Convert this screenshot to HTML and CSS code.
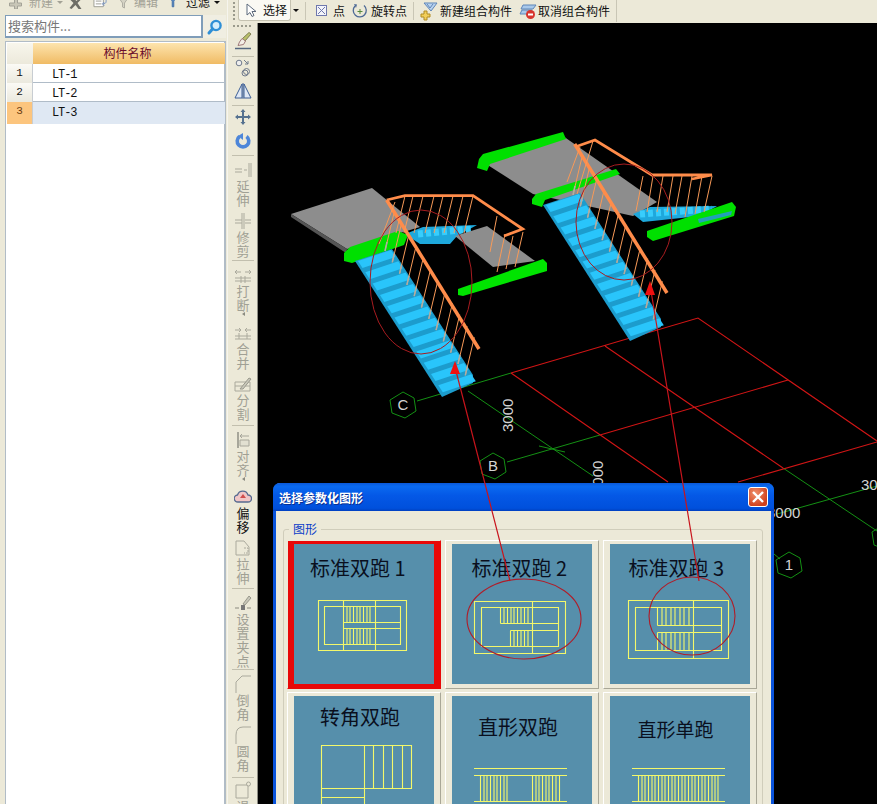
FILE: index.html
```html
<!DOCTYPE html>
<html lang="zh">
<head>
<meta charset="utf-8">
<title>选择参数化图形</title>
<link rel="stylesheet" href="styles.css">
</head>
<body>
<div class="app">
  <aside class="left">
    <div class="left-tools">
      <span class="lt lt-new"><svg class="i14" viewBox="0 0 14 14"><path d="M1 8h5V3h3v5h4v3H9v3H6v-3H1z" fill="#c9c7b8" stroke="#a4a398"/></svg><em>新建</em><i class="caret grey"></i></span>
      <span class="lt lt-x"><svg class="i14" viewBox="0 0 14 14"><path d="M2 1l5 5 5-5 1 2-5 5 4 6-3 0-3-4-4 4-2-1 4-5-5-5z" fill="#6e6e66"/></svg></span>
      <span class="lt lt-doc"><svg class="i14" viewBox="0 0 16 14"><path d="M1 1h10v11H1zM3 6h6M3 9h6" fill="#fff" stroke="#9a9a90"/><path d="M11 9c3 0 3-2 3-4M12 7l-2 2 2 2" fill="none" stroke="#6f8fc4"/></svg></span>
      <span class="lt lt-edit"><svg class="i14" viewBox="0 0 14 14"><path d="M1 1h12L8 8v5l-2-1V8z" fill="#d5d3c5" stroke="#b0afa4"/></svg><em>编辑</em></span>
      <span class="lt lt-filter"><svg class="i10" viewBox="0 0 10 14"><path d="M1 1h8L6 6v7H4V6z" fill="#5d8fc9" stroke="#36659f"/></svg><b>过滤</b><i class="caret"></i></span>
    </div>
    <div class="search">
      <div class="search-input">搜索构件...</div>
      <div class="search-btn"><svg width="18" height="18" viewBox="0 0 18 18"><circle cx="10" cy="7.500" r="4.600" fill="#d7eefb" stroke="#2f8fd6" stroke-width="2.400"/><path d="M6.500 11 3 15" stroke="#2f8fd6" stroke-width="3" stroke-linecap="round"/></svg></div>
    </div>
    <div class="table">
      <div class="row head"><div class="idx"></div><div class="name">构件名称</div></div>
      <div class="row"><div class="idx">1</div><div class="name">LT-1</div></div>
      <div class="row"><div class="idx">2</div><div class="name">LT-2</div></div>
      <div class="row sel-row"><div class="idx">3</div><div class="name">LT-3</div></div>
    </div>
  </aside>

  <div class="right">
    <div class="topbar">
      <span class="grip-v"></span>
      <span class="select-btn"><svg width="12" height="15" viewBox="0 0 12 15"><path d="M2 1v11l3-2.500 2 4 2-1-2-4h4z" fill="#fff" stroke="#5d6a7c"/></svg><span>选择</span></span>
      <i class="caret sel-caret"></i>
      <span class="tsep"></span>
      <span class="tb tb-point"><svg width="13" height="13" viewBox="0 0 13 13"><rect x="1.500" y="1.500" width="10" height="10" fill="#f3f4fa" stroke="#6f78ad"/><path d="M3 3l7 7M10 3l-7 7" stroke="#6f78ad"/></svg><span>点</span></span>
      <span class="tb tb-rot"><svg width="16" height="16" viewBox="0 0 16 16"><path d="M3 3a6.500 6.500 0 1 0 9-.5" fill="none" stroke="#4e6a96" stroke-width="1.300"/><path d="M2 1l3 .5L4 5z" fill="#4e6a96"/><path d="M8 6v5M5.500 8.500h5" stroke="#55883c"/></svg><span>旋转点</span></span>
      <span class="tsep"></span>
      <span class="tb tb-new"><svg width="18" height="20" viewBox="0 0 18 20"><path d="M4 2h13l-6 8z" fill="#b9d3ef" stroke="#5f86b8"/><path d="M7 3l3 4 3-4" fill="none" stroke="#5f86b8"/><path d="M1 13h3v-3h3v3h3v3H7v3H4v-3H1z" fill="#f2cf5b" stroke="#b18c22"/></svg><span>新建组合构件</span></span>
      <span class="tb tb-del"><svg width="18" height="18" viewBox="0 0 18 18"><path d="M4 3h13l-3 4H2zM3 8h10l-2 4H1z" fill="#a9c9ea" stroke="#5f86b8"/><circle cx="11.500" cy="12.500" r="4.500" fill="#d8342c"/><path d="M9 12.500h5" stroke="#fff" stroke-width="2"/></svg><span>取消组合构件</span></span>
      <span class="tend"></span>
    </div>

    <div class="work">
      <nav class="vbar">
        <span class="grip-h"></span>
        <div class="tool m5"><svg class="vi" viewBox="0 0 18 18"><path d="M11 9l6-7-2-1.500-7 6.500z" fill="#b9c06a" stroke="#7d7d50"/><path d="M8 6.500l3.500 2.500-2 3.500-5.500 1 1.500-3.500z" fill="#f3efe6" stroke="#a07a7a"/><path d="M1 16.500h16" stroke="#55687f" stroke-width="1.500"/></svg></div>
        <hr class="sep m6">
        <div class="tool m2"><svg class="vi" viewBox="0 0 18 18"><circle cx="5" cy="4" r="2.800" fill="#eee" stroke="#6f7a8c"/><circle cx="12.500" cy="12.500" r="3" fill="none" stroke="#6f7a8c"/><circle cx="11" cy="14" r="3" fill="none" stroke="#6f7a8c"/><path d="M10 1l4 4M14 2v3h-3" fill="none" stroke="#6f7a8c"/></svg></div>
        <div class="tool m5"><svg class="vi" viewBox="0 0 18 18"><path d="M8 2v14H1zM10 2v14h7z" fill="#dfe8f4" stroke="#3c5e96"/><path d="M9 1v16" stroke="#3c5e96"/></svg></div>
        <hr class="sep m5">
        <div class="tool m2"><svg class="vi" viewBox="0 0 18 18"><path d="M9 1l2.500 3H10v4h4V6.500L17 9l-3 2.500V10h-4v4h1.500L9 17l-2.500-3H8v-4H4v1.500L1 9l3-2.500V8h4V4H6.500z" fill="#55718f"/></svg></div>
        <div class="tool m6"><svg class="vi" viewBox="0 0 18 18"><path d="M5.500 4.500a5.800 5.800 0 1 0 7 0" fill="none" stroke="#4d86d9" stroke-width="3.600"/><path d="M9 1v7L4 4z" fill="#4d86d9"/></svg></div>
        <hr class="sep m5">
        <div class="tool m5 off"><svg class="vi" viewBox="0 0 18 18"><path d="M1 8h7M1 11h7M10 9h3M15 2v14M17 2v14" fill="none" stroke="#aaa99c"/></svg><span class="vl">延<br>伸</span></div>
        <div class="tool m5 off"><svg class="vi" viewBox="0 0 18 18"><path d="M1 8h7M1 11h7M11 8h6M11 11h6M8 1v16M10 1v16" fill="none" stroke="#aaa99c"/></svg><span class="vl">修<br>剪</span></div>
        <hr class="sep m2">
        <div class="tool m5 off"><svg class="vi" viewBox="0 0 18 18"><path d="M1 6h6M3 4L1 6l2 2M11 6h6M15 4l2 2-2 2M1 12h16M1 15h16M7 10v7M11 10v7" fill="none" stroke="#aaa99c"/></svg><span class="vl">打<br>断</span><i class="tri"></i></div>
        <div class="tool m8 off"><svg class="vi" viewBox="0 0 18 18"><path d="M1 6h6M5 4l2 2-2 2M17 6h-6M13 4l-2 2 2 2M1 12h16M1 15h16M5 9v6M13 9v6" fill="none" stroke="#aaa99c"/></svg><span class="vl">合<br>并</span></div>
        <div class="tool m5 off"><svg class="vi" viewBox="0 0 18 18"><path d="M1 7h15v9H1zM1 11h15" fill="none" stroke="#aaa99c"/><path d="M6 14l9-11 2 1-8 10z" fill="#c9c8ba" stroke="#99988c"/></svg><span class="vl">分<br>割</span></div>
        <hr class="sep m4">
        <div class="tool m5 off"><svg class="vi" viewBox="0 0 18 18"><path d="M3 1h2v16H3z" fill="#a7a69a"/><path d="M6 5h9M8 3L6 5l2 2M6 9h9v6H6z" fill="#e2e0d1" stroke="#a7a69a"/></svg><span class="vl">对<br>齐</span><i class="tri"></i></div>
        <div class="tool m7"><svg class="vi" viewBox="0 0 18 18"><path d="M4 14a3.500 3.500 0 0 1-.5-7A5.500 5.500 0 0 1 14 7a3.500 3.500 0 0 1 0 7z" fill="#f0c6c6" stroke="#556a90" stroke-width="1.300"/><path d="M9 6l3 4H6z" fill="#cf4d4d"/></svg><span class="vl">偏<br>移</span></div>
        <div class="tool m5 off"><svg class="vi" viewBox="0 0 18 18"><path d="M2 2h8l5 6v8H2z" fill="none" stroke="#aaa99c"/><path d="M10 9h4v5h-4" fill="none" stroke="#aaa99c" stroke-dasharray="2 1"/></svg><span class="vl">拉<br>伸</span></div>
        <hr class="sep m3">
        <div class="tool m5 off"><svg class="vi" viewBox="0 0 18 18"><path d="M1 14h4M13 14h4" stroke="#aaa99c" stroke-width="1.500"/><rect x="7" y="11" width="4" height="5" fill="#777"/><path d="M9 10l6-8 2 2-6 7z" fill="#c9c8ba" stroke="#99988c"/></svg><span class="vl">设<br>置<br>夹<br>点</span></div>
        <hr class="sep m1">
        <div class="tool m5 off"><svg class="vi" viewBox="0 0 18 18"><path d="M17 1H8L2 7v11" fill="none" stroke="#aaa99c"/></svg><span class="vl">倒<br>角</span></div>
        <div class="tool m5 off"><svg class="vi" viewBox="0 0 18 18"><path d="M17 1H9Q2 1 2 9v9" fill="none" stroke="#aaa99c"/></svg><span class="vl">圆<br>角</span></div>
        <hr class="sep m5">
        <div class="tool m3 off"><svg class="vi" viewBox="0 0 18 18"><path d="M2 4h12v13H2z" fill="none" stroke="#aaa99c"/><circle cx="14.500" cy="3" r="2" fill="#ece9d8" stroke="#aaa99c"/></svg><span class="vl">退</span></div>
      </nav>

      <main class="canvas">
        <svg class="scene" viewBox="258 24 619 780" width="619" height="780">
          <defs>
            <polygon id="tread" points="358,262 391,251 395.500,258 362.500,269" fill="#29c5fb"/>
            <g id="bal">
              <line x1="385" y1="252" x2="394" y2="214" stroke="#f89a58" stroke-width="1"/>
              <line x1="385" y1="252" x2="387" y2="243" stroke="#b0aea4" stroke-width="1.500"/>
            </g>
            <g id="flight">
              <polygon points="355,262 392,250 473,376 473,384 442,398" fill="#1c9ccd"/>
              <use href="#tread"/>
              <use href="#tread" x="7.300" y="11.300"/>
              <use href="#tread" x="14.600" y="22.600"/>
              <use href="#tread" x="21.900" y="33.900"/>
              <use href="#tread" x="29.200" y="45.200"/>
              <use href="#tread" x="36.500" y="56.500"/>
              <use href="#tread" x="43.800" y="67.800"/>
              <use href="#tread" x="51.100" y="79.100"/>
              <use href="#tread" x="58.400" y="90.400"/>
              <use href="#tread" x="65.700" y="101.700"/>
              <use href="#tread" x="73" y="113"/>
              <use href="#tread" x="80.300" y="124.300"/>
              <use href="#bal"/>
              <use href="#bal" x="7.300" y="11.300"/>
              <use href="#bal" x="14.600" y="22.600"/>
              <use href="#bal" x="21.900" y="33.900"/>
              <use href="#bal" x="29.200" y="45.200"/>
              <use href="#bal" x="36.500" y="56.500"/>
              <use href="#bal" x="43.800" y="67.800"/>
              <use href="#bal" x="51.100" y="79.100"/>
              <use href="#bal" x="58.400" y="90.400"/>
              <use href="#bal" x="65.700" y="101.700"/>
              <use href="#bal" x="73" y="113"/>
              <use href="#bal" x="80.300" y="124.300"/>
              <line x1="386.700" y1="201" x2="479" y2="350" stroke="#ff8c4a" stroke-width="3.500"/>
            </g>
          </defs>

          <!-- grid -->
          <g fill="none" stroke="#149014" stroke-width="1">
            <path d="M417 402 511 374M507 463 600 436M468 392 593 477M539 447 565 453M783 469 877 532M777 515 877 487M774 555 780 560"/>
            <polygon points="403,393 414,399 416,412 405,419 392,414 390,401"/>
            <polygon points="493,454 504,460 506,473 495,480 482,475 480,462"/>
            <polygon points="789,553 800,559 802,572 791,579 778,574 776,561"/>
            <polygon points="885,525 896,531 898,544 887,551 874,546 872,533"/>
          </g>
          <path d="M511 374 698 319 877 442M600 436 788 381M738 483 877 443M511 374 668 483M605 347 783 469" fill="none" stroke="#d01515" stroke-width="1.100"/>
          <g class="dim">
            <text x="403" y="411" text-anchor="middle">C</text>
            <text x="493" y="472" text-anchor="middle">B</text>
            <text x="789" y="571" text-anchor="middle">1</text>
            <text transform="translate(513 433) rotate(-90)">3000</text>
            <text transform="translate(603 495) rotate(-90)">3000</text>
            <text x="767" y="519">3000</text>
            <text x="861" y="491">3000</text>
          </g>

          <!-- stair one -->
          <polygon points="291,215 372,189 420,228 347,250" fill="#8d8d8d"/>
          <polygon points="291,215 291,218 346,254 347,250" fill="#555"/>
          <polygon points="405,235 423,228 477,226 457,237 450,245 420,245" fill="#1ea8dc"/>
          <line x1="418" y1="235" x2="472" y2="230" stroke="#38cdfc" stroke-width="7" stroke-dasharray="5 3"/>
          <polygon points="455,237 487,227 535,262 493,268" fill="#8d8d8d"/>
          <polygon points="344,254 350,248 398,232 408,236 404,246 352,264 344,262" fill="#00e000"/>
          <polygon points="458,290 543,260 547,264 547,272 463,297 458,296" fill="#00e400"/>
          <use href="#flight"/>
          <path d="M405 197l-9 37M413 197l-9 37M423 197l-9 37M434 197l-9 37M443 197l-9 37M453 197l-9 37M463 197l-9 37M473 197l-9 37M395 203l-16 42M497 217l-7 36M505 235l-8 38M513 237l-7 33M523 233l-8 35" stroke="#f89a58" stroke-width="1" fill="none"/>
          <polyline points="386.700,201 405,196.700 473,196.700 522.700,230 504,237" fill="none" stroke="#ff8c4a" stroke-width="2.800"/>
          <ellipse cx="421" cy="283" rx="51" ry="72" fill="none" stroke="#a81c20"/>

          <!-- stair two -->
          <polygon points="483,163 563,137 657,203 633,217 533,195" fill="#8d8d8d"/>
          <polygon points="479,160 483,155 563,133 566,140 490,165 487,172 477,169" fill="#00e000"/>
          <polygon points="633,215 650,208 717,207 700,217 643,223" fill="#1ea8dc"/>
          <line x1="640" y1="215" x2="712" y2="210" stroke="#38cdfc" stroke-width="7" stroke-dasharray="5 3"/>
          <polygon points="532,200 536,195 616,170 620,175 545,201 542,208 532,205" fill="#00e000"/>
          <polygon points="647,232 732,203 736,208 734,217 653,242 647,238" fill="#00e000"/>
          <polygon points="698,220 732,212 731,216 699,224" fill="#22a0b8"/>
          <use href="#flight" x="188" y="-56"/>
          <path d="M580 148l-13 35M593 142l-16 53M643 177l-7 35M653 177l-6 36M663 177l-6 36M673 177l-6 36M682 177l-7 38M692 177l-7 41M702 177l-7 38M712 177l-8 36" stroke="#f89a58" stroke-width="1" fill="none"/>
          <polyline points="575,148 595,141 652,176 712,176 692,180" fill="none" stroke="#ff8c4a" stroke-width="2.800"/>
          <ellipse cx="624" cy="223" rx="48" ry="58" fill="none" stroke="#a81c20"/>
        </svg>

        <section class="dialog">
          <header class="dlg-title">
            <span>选择参数化图形</span>
            <button class="dlg-close" type="button"><svg width="14" height="14" viewBox="0 0 14 14"><path d="M2 2l10 10M12 2L2 12" stroke="#fff" stroke-width="2.400"/></svg></button>
          </header>
          <fieldset class="group">
            <legend>图形</legend>
            <div class="cells">
              <div class="cell sel"><svg class="thumb" viewBox="0 0 140 140">
                <text x="16" y="32" class="cap">标准双跑 1</text>
                <path d="M24.500 56.500h88v50h-88zM30.500 62.500h76v38h-76zM49.500 56.500v50M81.500 56.500v50M49.500 78.500h57M49.500 84.500h57M53 62.500v16M56 62.500v16M59.500 62.500v16M63 62.500v16M66 62.500v16M69.500 62.500v16M73 62.500v16M76 62.500v16M53 84.500v16M56 84.500v16M59.500 84.500v16M63 84.500v16M66 84.500v16M69.500 84.500v16M73 84.500v16M76 84.500v16" class="plan"/>
              </svg></div>
              <div class="cell"><svg class="thumb" viewBox="0 0 140 140">
                <text x="19.500" y="32" class="cap">标准双跑 2</text>
                <path d="M22.500 57.500h91v52h-91zM29.500 63.500h77v39h-77zM80.500 57.500v52M48.500 79.500h58M58.500 86.500h48M48.500 63.500v16M58.500 86.500v16M52 63.500v16M55.500 63.500v16M59 63.500v16M62 63.500v16M65.500 63.500v16M69 63.500v16M72.500 63.500v16M76 63.500v16M62 86.500v16M65.500 86.500v16M69 86.500v16M72.500 86.500v16M76 86.500v16" class="plan"/>
              </svg></div>
              <div class="cell"><svg class="thumb" viewBox="0 0 140 140">
                <text x="18.500" y="32" class="cap">标准双跑 3</text>
                <path d="M18.500 56.500h100v58h-100zM25.500 63.500h86v43h-86zM83.500 56.500v58M47.500 81.500h64M47.500 88.500h64M47.500 63.500v18M47.500 88.500v18M52 63.500v18M56 63.500v18M61 63.500v18M65 63.500v18M70 63.500v18M74 63.500v18M79 63.500v18M52 88.500v18M56 88.500v18M61 88.500v18M65 88.500v18M70 88.500v18M74 88.500v18M79 88.500v18" class="plan"/>
              </svg></div>
              <div class="cell"><svg class="thumb" viewBox="0 0 140 140">
                <text x="26" y="29" class="cap">转角双跑</text>
                <path d="M27.500 49.500h90v43h-90zM27.500 49.500v91M70.500 49.500v91M79.500 49.500v43M89.500 49.500v43M98.500 49.500v43M108.500 49.500v43M27.500 101.500h43" class="plan"/>
              </svg></div>
              <div class="cell"><svg class="thumb" viewBox="0 0 140 140">
                <text x="26" y="39" class="cap">直形双跑</text>
                <path d="M22 72.500h93M22 79.500h93M22 105.500h93M28.500 79.500v26M32 79.500v26M35 79.500v26M38.500 79.500v26M42 79.500v26M45 79.500v26M48.500 79.500v26M52 79.500v26M55 79.500v26M80.500 79.500v26M84 79.500v26M87 79.500v26M90.500 79.500v26M94 79.500v26M97 79.500v26M100.500 79.500v26M104 79.500v26M107.500 79.500v26" class="plan"/>
              </svg></div>
              <div class="cell"><svg class="thumb" viewBox="0 0 140 140">
                <text x="27.500" y="41" class="cap cap-s">直形单跑</text>
                <path d="M22 72.500h93M22 79.500h93M22 105.500h93M28.500 79.500v26M32 79.500v26M35 79.500v26M38.500 79.500v26M42 79.500v26M45 79.500v26M48.500 79.500v26M52 79.500v26M55 79.500v26M58.500 79.500v26M62 79.500v26M65 79.500v26M68.500 79.500v26M72 79.500v26M75 79.500v26M78.500 79.500v26M82 79.500v26M85 79.500v26M88.500 79.500v26M92 79.500v26M95 79.500v26M98.500 79.500v26M102 79.500v26M105 79.500v26M108 79.500v26" class="plan"/>
              </svg></div>
            </div>
          </fieldset>
        </section>

        <svg class="scene over" viewBox="258 24 619 780" width="619" height="780">
          <path d="M456 372 510 582M651 292 699 582" fill="none" stroke="#c8141c" stroke-width="1.200"/>
          <polygon points="455,362 460,375 450,375" fill="#f01010"/>
          <polygon points="650,282 655,296 645,296" fill="#f01010"/>
          <ellipse cx="524" cy="620" rx="57" ry="40" fill="none" stroke="#b01c28" stroke-width="1.100"/>
          <ellipse cx="692" cy="617" rx="43" ry="39" fill="none" stroke="#b01c28" stroke-width="1.100"/>
        </svg>
      </main>
    </div>
  </div>
</div>
</body>
</html>
```
FILE: styles.css
```css
* { box-sizing: border-box; }
html, body { margin: 0; height: 100%; overflow: hidden; }
body {
  font-family: "Noto Sans CJK SC", "Liberation Sans", sans-serif;
  font-size: 12px;
  color: #111;
  background: #ece9d8;
}
.app { display: flex; width: 877px; height: 804px; overflow: hidden; }

/* left panel */
.left { width: 228px; flex: none; display: flex; flex-direction: column; background: #ece9d8; border-right: 1px solid #f6f5ee; }
.left-tools { height: 15px; overflow: hidden; display: flex; align-items: flex-start; padding-left: 8px; }
.lt { display: flex; align-items: center; height: 14px; margin-top: -5px; flex: none; }
.lt em { font-style: normal; color: #a3a296; margin-left: 6px; line-height: 12px; }
.lt b { font-weight: 400; margin-left: 9px; line-height: 12px; }
.i14 { width: 15px; height: 14px; display: block; }
.i10 { width: 8px; height: 14px; display: block; }
.lt-new .caret { margin-left: 4px; }
.lt-x { margin-left: 6px; }
.lt-doc { margin-left: 9px; }
.lt-edit { margin-left: 8px; }
.lt-edit em { margin-left: 3px; }
.lt-filter { margin-left: 11px; }
.lt-filter .caret { margin-left: 4px; }
.caret { display: inline-block; width: 0; height: 0; border: 3px solid transparent; border-top: 3px solid #111; border-bottom: 0; }
.caret.grey { border-top-color: #a3a296; }

.search { display: flex; height: 23px; margin: 0 1px 0 5px; flex: none; }
.search-input { width: 198px; height: 23px; border: 1px solid #7f9db9; border-width: 1px 2px 2px 1px; background: #fff; color: #777; font-size: 13px; line-height: 20px; padding-left: 2px; }
.search-btn { flex: 1; display: flex; align-items: center; justify-content: center; background: #f0eee2; }

.table { flex: 1; margin: 3px 1px 0 5px; background: #fff; border: 2px solid #b1bcc6; border-width: 1px 2px 0 1px; padding: 1px 0 0 1px; }
.row { display: grid; grid-template-columns: 26px 192px; height: 19px; border-bottom: 1px solid #b0bcc8; }
.row .idx { background: linear-gradient(#fbfaf5, #e8e6da); border-right: 1px solid #c8cdd2; text-align: center; font-family: "Liberation Mono", monospace; font-size: 11px; line-height: 19px; }
.row .name { font-family: "Liberation Mono", monospace; font-size: 12px; letter-spacing: -1.100px; line-height: 22px; padding-left: 19px; }
.row.head { height: 21px; border-bottom: 0; }
.row.head .idx { background: linear-gradient(#f8f6ec, #ece9db); border-right: 0; }
.row.head .name { background: linear-gradient(#fde4ae, #f0bb64); font-family: "Noto Sans CJK SC", sans-serif; font-size: 12px; letter-spacing: 0; color: #6b0a2b; text-align: center; padding: 0 3px 0 0; line-height: 20px; }
.sel-row .idx { background: #fcc57e; color: #6b3a10; }
.sel-row .name { background: #dfe8f3; }

/* right side */
.right { flex: 1; min-width: 0; display: flex; flex-direction: column; }
.topbar { height: 23px; flex: none; display: flex; align-items: center; background: #ece9d8; padding: 0 0 2px 5px; }
.grip-v { width: 2px; height: 18px; margin-right: 3px; background: repeating-linear-gradient(#9a9a8c 0 2px, transparent 2px 4px); }
.select-btn { display: flex; align-items: center; gap: 6px; width: 53px; height: 21px; padding-left: 6px; background: #faf9f3; border: 1px solid #c5c2b0; border-width: 0 1px 1px 1px; border-radius: 0 0 3px 3px; line-height: 20px; }
.sel-caret { margin-left: 2px; }
.tsep { width: 1px; height: 18px; background: #c9c6b5; margin: 0 6px; }
.tb { display: flex; align-items: center; line-height: 20px; flex: none; }
.tb-point { gap: 5px; margin-left: 3px; }
.tb-rot { gap: 3px; margin-left: 7px; }
.tb-new { gap: 2px; margin-left: 0; }
.tb-del { gap: 1px; margin-left: 7px; }
.tend { width: 1px; height: 22px; background: #c9c6b5; margin-left: 6px; }

.work { flex: 1; display: flex; min-height: 0; }
.vbar { width: 30px; flex: none; display: flex; flex-direction: column; align-items: center; background: #ece9d8; box-shadow: inset -1px 0 0 #8e8d84; overflow: hidden; }
.grip-h { width: 20px; height: 2px; flex: none; margin-top: 2px; background: repeating-linear-gradient(90deg, #9a9a8c 0 2px, transparent 2px 4px); }
.tool { display: flex; flex-direction: column; align-items: center; flex: none; }
.vi { width: 18px; height: 18px; display: block; flex: none; }
.vl { display: block; font-size: 13px; line-height: 14px; text-align: center; }
.off .vl { color: #a0a094; }
.tri { display: block; width: 0; height: 4px; border: 2px solid transparent; border-right: 3px solid #8a8a80; border-left: 0; }
.sep { width: 22px; height: 1px; border: 0; background: #c2bfae; flex: none; margin-bottom: 0; }
.m1 { margin-top: 1px; }
.m2 { margin-top: 2px; }
.m3 { margin-top: 3px; }
.m4 { margin-top: 4px; }
.m5 { margin-top: 5px; }
.m6 { margin-top: 6px; }
.m7 { margin-top: 7px; }
.m8 { margin-top: 8px; }

/* canvas */
.canvas { flex: 1; position: relative; overflow: hidden; background: #000; }
.scene { position: absolute; left: 0; top: 0; display: block; }
.scene.over { pointer-events: none; }
.dim text { fill: #d4d4d4; font-family: "Liberation Sans", sans-serif; font-size: 15px; }

/* dialog */
.dialog { position: absolute; left: 15px; top: 460px; width: 501px; height: 330px; background: #ece9d8; border: 3px solid #0a54dc; border-top: 0; border-radius: 7px 7px 0 0; }
.dlg-title { height: 28px; margin: 0 -3px; display: flex; align-items: center; justify-content: space-between; padding: 0 6px 0 6px; background: linear-gradient(#0a58d8 0, #0a6af0 12%, #0458e6 45%, #0050dc 90%, #0040c0 100%); border-radius: 7px 7px 0 0; color: #fff; font-weight: 700; font-size: 12px; text-shadow: 1px 1px 0 #0a2f90; }
.dlg-close { width: 20px; height: 20px; padding: 0; border: 1px solid #fff; border-radius: 3px; background: radial-gradient(circle at 35% 30%, #f0906c, #d0401c 75%); display: flex; align-items: center; justify-content: center; }
.group { margin: 11px 8px 0 7px; padding: 4px 3px 0; border: 1px solid #d0cdbb; border-radius: 3px; min-width: 0; height: 400px; }
.group legend { padding: 0 4px; margin-left: 2px; color: #0a3cc8; font-size: 12px; line-height: 14px; }
.cells { display: grid; grid-template-columns: repeat(3, 154px); column-gap: 4px; row-gap: 3px; }
.cell { height: 149px; padding: 3px 6px 0; background: #ece9d8; border: 1px solid; border-color: #fff #a9a797 #a9a797 #fff; }
.cell.sel { background: #e80808; border-color: #ece9d8 #e80808 #e80808 #ece9d8; }
.thumb { display: block; width: 140px; height: 140px; background: #568fab; }
.cap { font-family: "Noto Sans CJK SC", sans-serif; font-size: 20px; fill: #0a0f1e; font-weight: 400; }
.cap-s { font-size: 19px; }
.plan { fill: none; stroke: #f4f86a; stroke-width: 1.100; }
```
